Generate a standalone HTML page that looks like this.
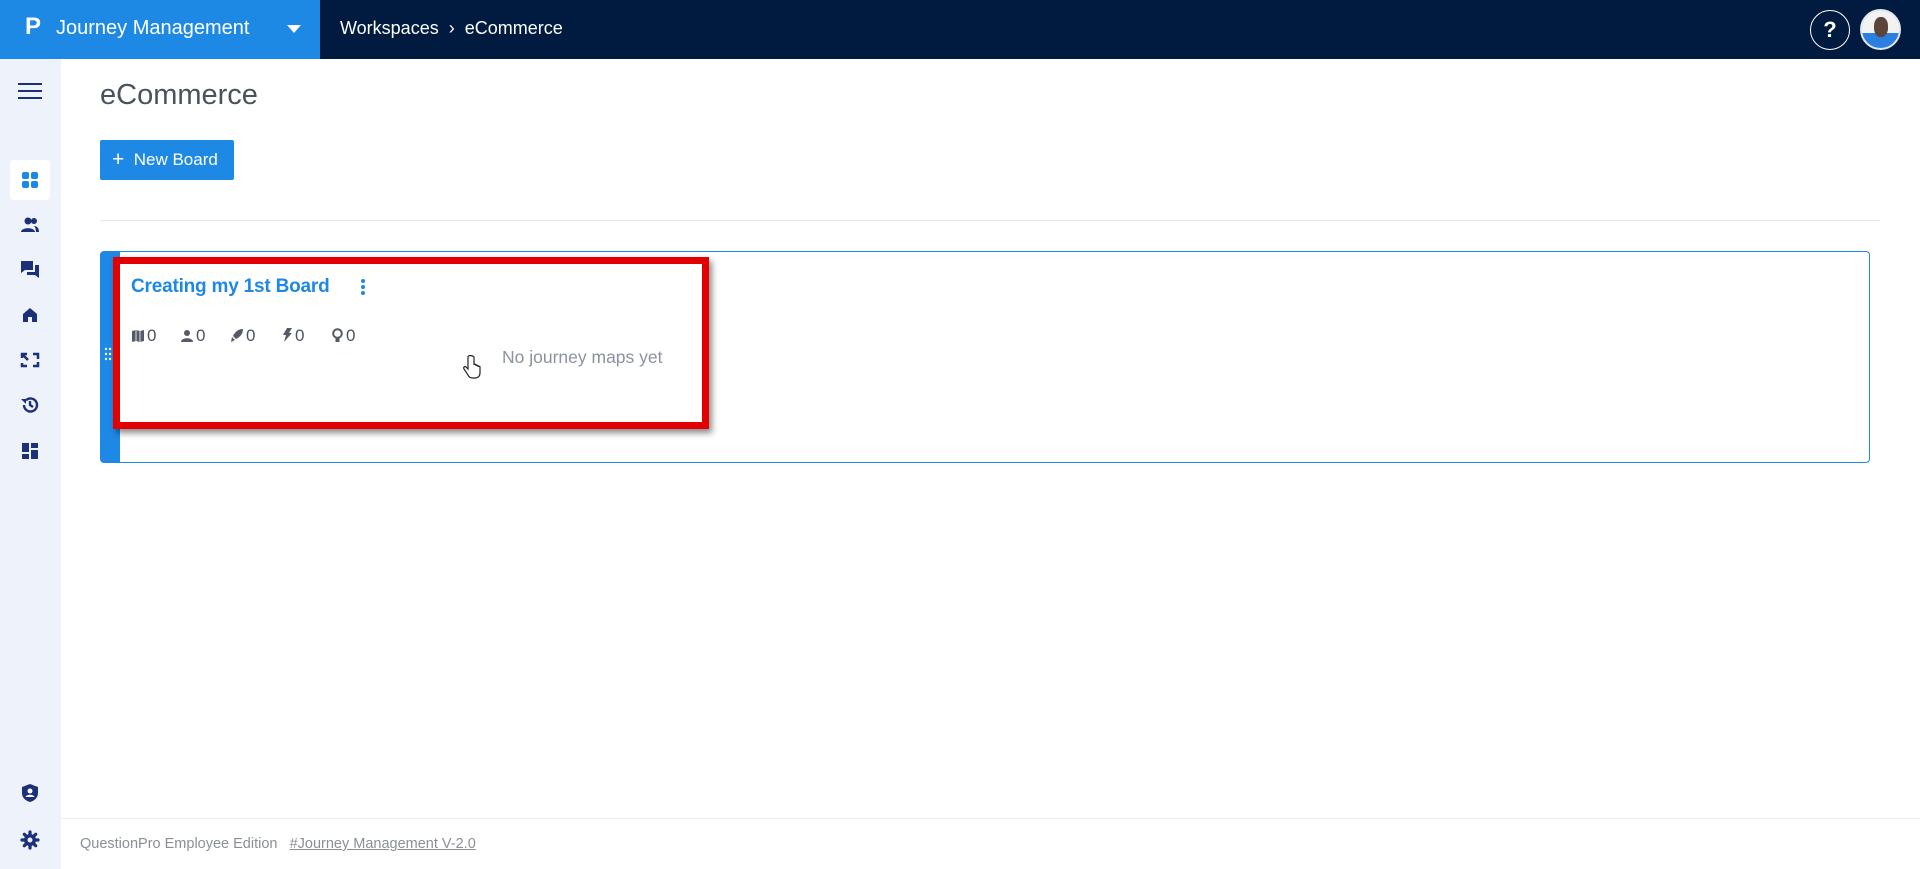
<!DOCTYPE html>
<html><head><meta charset="utf-8"><style>
*{box-sizing:border-box;margin:0;padding:0}
body{width:1920px;height:869px;overflow:hidden;background:#fff;font-family:"Liberation Sans",sans-serif;position:relative}
.top{position:absolute;left:0;top:0;width:1920px;height:59px;background:#001a40}
.brand{position:absolute;left:0;top:0;width:320px;height:59px;background:#1e88e5;color:#fff}
.abs{position:absolute}
.side{position:absolute;left:0;top:59px;width:61px;height:810px;background:#eef2fa}
.ic{position:absolute;left:20px;width:20px;height:20px}
.st{position:absolute;top:326px;font-size:17px;color:#4a5260;white-space:nowrap}
.st svg{vertical-align:-1px;margin-right:3px}
</style></head><body>
<div class="top">
 <div class="brand">
  <div class="abs" style="left:25px;top:13px;font-size:24px;font-weight:bold">P</div>
  <div class="abs" style="left:56px;top:17px;font-size:20px">Journey Management</div>
  <svg class="abs" style="left:287px;top:24px" width="14" height="10"><path d="M0 1H14L7 9Z" fill="#fff"/></svg>
 </div>
 <div class="abs" style="left:340px;top:18px;font-size:18px;color:#fff">Workspaces &nbsp;›&nbsp; eCommerce</div>
 <div class="abs" style="left:1810px;top:10px;width:40px;height:40px;border:1.5px solid #fff;border-radius:50%;color:#fff;font-weight:bold;font-size:22px;text-align:center;line-height:37px">?</div>
 <div class="abs" style="left:1860px;top:9px;width:41px;height:41px;border-radius:50%;border:2px solid #dfe6ee;background:linear-gradient(#f2f2f2 0,#f2f2f2 60%,#2a7fe0 60%);overflow:hidden"><div class="abs" style="left:12px;top:6px;width:14px;height:20px;border-radius:45%;background:#5b4438"></div></div>
</div>
<div class="side">
 <svg class="abs" style="left:18px;top:23px" width="24" height="18"><path d="M0 2H24M0 9H24M0 16H24" stroke="#1b2f7a" stroke-width="2"/></svg>
 <div class="abs" style="left:10px;top:101px;width:40px;height:40px;background:#fff;border-radius:4px"></div>
 <svg class="ic" style="top:111px" viewBox="0 0 20 20"><g fill="#1e88e5"><rect x="2" y="2" width="7" height="7" rx="2"/><rect x="11" y="2" width="7" height="7" rx="2"/><rect x="2" y="11" width="7" height="7" rx="2"/><rect x="11" y="11" width="7" height="7" rx="2"/></g></svg>
 <svg class="ic" style="top:156px" viewBox="0 0 20 20"><g fill="#1b2f7a"><circle cx="8" cy="6" r="3.5"/><path d="M1 17c0-5 14-5 14 0z"/><circle cx="14" cy="6" r="3"/><path d="M14 11c3 0 5 2 5 6h-3c0-3-1-5-2-6z"/></g></svg>
 <svg class="ic" style="top:200px" viewBox="0 0 20 20"><g fill="#1b2f7a"><path d="M1 2h12v9H5l-4 3z"/><path d="M15 6h4v13l-4-3H7v-3h8z"/></g></svg>
 <svg class="ic" style="top:246px" viewBox="0 0 20 20"><path d="M10 3l7 6v8h-5v-5H8v5H3V9z" fill="#1b2f7a"/></svg>
 <svg class="ic" style="top:291px" viewBox="0 0 20 20"><g fill="none" stroke="#1b2f7a" stroke-width="2.5"><path d="M2 8V4h5M13 4h5v5M18 12v4h-5M7 16H2v-3M3 5l5 5"/></g></svg>
 <svg class="ic" style="top:336px" viewBox="0 0 20 20"><g fill="none" stroke="#1b2f7a" stroke-width="2.4"><path d="M4 10a6.5 6.5 0 1 0 2-4.7"/><path d="M10 6v4l3 2"/></g><path d="M1 4h5v5z" fill="#1b2f7a"/></svg>
 <svg class="ic" style="top:382px" viewBox="0 0 20 20"><g fill="#1b2f7a"><rect x="2" y="2" width="7" height="9"/><rect x="11" y="2" width="7" height="5"/><rect x="2" y="13" width="7" height="5"/><rect x="11" y="9" width="7" height="9"/></g></svg>
 <svg class="ic" style="top:724px" viewBox="0 0 20 20"><path d="M10 1l8 3v6c0 5-4 8-8 9-4-1-8-4-8-9V4z" fill="#1b2f7a"/><circle cx="10" cy="8" r="2.5" fill="#fff"/><path d="M5.5 14c1-3 8-3 9 0z" fill="#fff"/></svg>
 <svg class="ic" style="top:771px" viewBox="0 0 20 20"><g stroke="#1b2f7a" stroke-width="3.2" stroke-linecap="round"><path d="M10 2v16M2 10h16M4.3 4.3l11.4 11.4M15.7 4.3L4.3 15.7"/></g><circle cx="10" cy="10" r="6" fill="#1b2f7a"/><circle cx="10" cy="10" r="2.5" fill="#eef2fa"/></svg>
</div>
<div class="abs" style="left:100px;top:79px;font-size:29px;color:#4a5260">eCommerce</div>
<div class="abs" style="left:100px;top:140px;width:134px;height:40px;background:#1e88e5;border-radius:2px;color:#fff;font-size:17px;line-height:40px;padding-left:12px"><span style="font-size:21px;vertical-align:-1px">+</span>&nbsp; New Board</div>
<div class="abs" style="left:100px;top:220px;width:1780px;height:1px;background:#e3e6ea"></div>
<div class="abs" style="left:100px;top:251px;width:1770px;height:212px;border:1px solid #1e88e5;border-radius:4px;border-left:20px solid #1e88e5"></div>
<svg class="abs" style="left:104px;top:347px" width="8" height="14"><g fill="#fff"><circle cx="2" cy="2" r="1.2"/><circle cx="6" cy="2" r="1.2"/><circle cx="2" cy="7" r="1.2"/><circle cx="6" cy="7" r="1.2"/><circle cx="2" cy="12" r="1.2"/><circle cx="6" cy="12" r="1.2"/></g></svg>
<div class="abs" style="left:113px;top:257px;width:596px;height:172px;border:7px solid #e20000;box-shadow:3px 4px 6px rgba(0,0,0,.45)"></div>
<div class="abs" style="left:131px;top:276px;font-size:19px;color:#1e88e5;font-weight:bold;letter-spacing:-0.2px">Creating my 1st Board</div>
<svg class="abs" style="left:360px;top:278px" width="6" height="18"><g fill="#1e88e5"><circle cx="3" cy="3" r="2"/><circle cx="3" cy="9" r="2"/><circle cx="3" cy="15" r="2"/></g></svg>
<div class="st" style="left:132px"><svg width="12" height="12" viewBox="0 0 12 12"><path d="M0 1l4-1 4 1 4-1v11l-4 1-4-1-4 1z" fill="#555b66"/><path d="M4 0v11M8 1v11" stroke="#fff" stroke-width=".8"/></svg>0</div>
<div class="st" style="left:181px"><svg width="12" height="12" viewBox="0 0 12 12"><circle cx="6" cy="3" r="3" fill="#555b66"/><path d="M0 12c0-5 12-5 12 0z" fill="#555b66"/></svg>0</div>
<div class="st" style="left:230px"><svg width="13" height="13" viewBox="0 0 13 13"><path d="M13 0C8 0 5 3 3 7l3 3c4-2 7-5 7-10zM2 8l3 3-4 2z" fill="#555b66"/></svg>0</div>
<div class="st" style="left:283px"><svg width="9" height="14" viewBox="0 0 9 14"><path d="M4 0h5L6 5h3L1 14l2-7H0z" fill="#555b66"/></svg>0</div>
<div class="st" style="left:332px"><svg width="11" height="14" viewBox="0 0 11 14"><circle cx="5.5" cy="5.5" r="4.3" fill="none" stroke="#555b66" stroke-width="2"/><rect x="3.5" y="10" width="4" height="4" fill="#555b66"/></svg>0</div>
<div class="abs" style="left:502px;top:347px;font-size:17.5px;color:#8a939e">No journey maps yet</div>
<svg class="abs" style="left:463px;top:355px" width="18" height="24" viewBox="0 0 18 24"><path d="M5 2v12l-2-2c-1-1-3 0-2 2l4 6c1 2 2 3 5 3h2c3 0 5-2 5-5v-6c0-1-2-1-2 0v-1c0-1-2-1-2 0v-1c0-1-2-1-2 0V2C9 0 5 0 5 2z" fill="#fff" stroke="#222" stroke-width="1.2"/></svg>
<div class="abs" style="left:61px;top:818px;width:1859px;height:1px;background:#edf0f3"></div>
<div class="abs" style="left:80px;top:836px;font-size:14.5px;color:#8a8f96">QuestionPro Employee Edition &nbsp; <u>#Journey Management V-2.0</u></div>
</body></html>
